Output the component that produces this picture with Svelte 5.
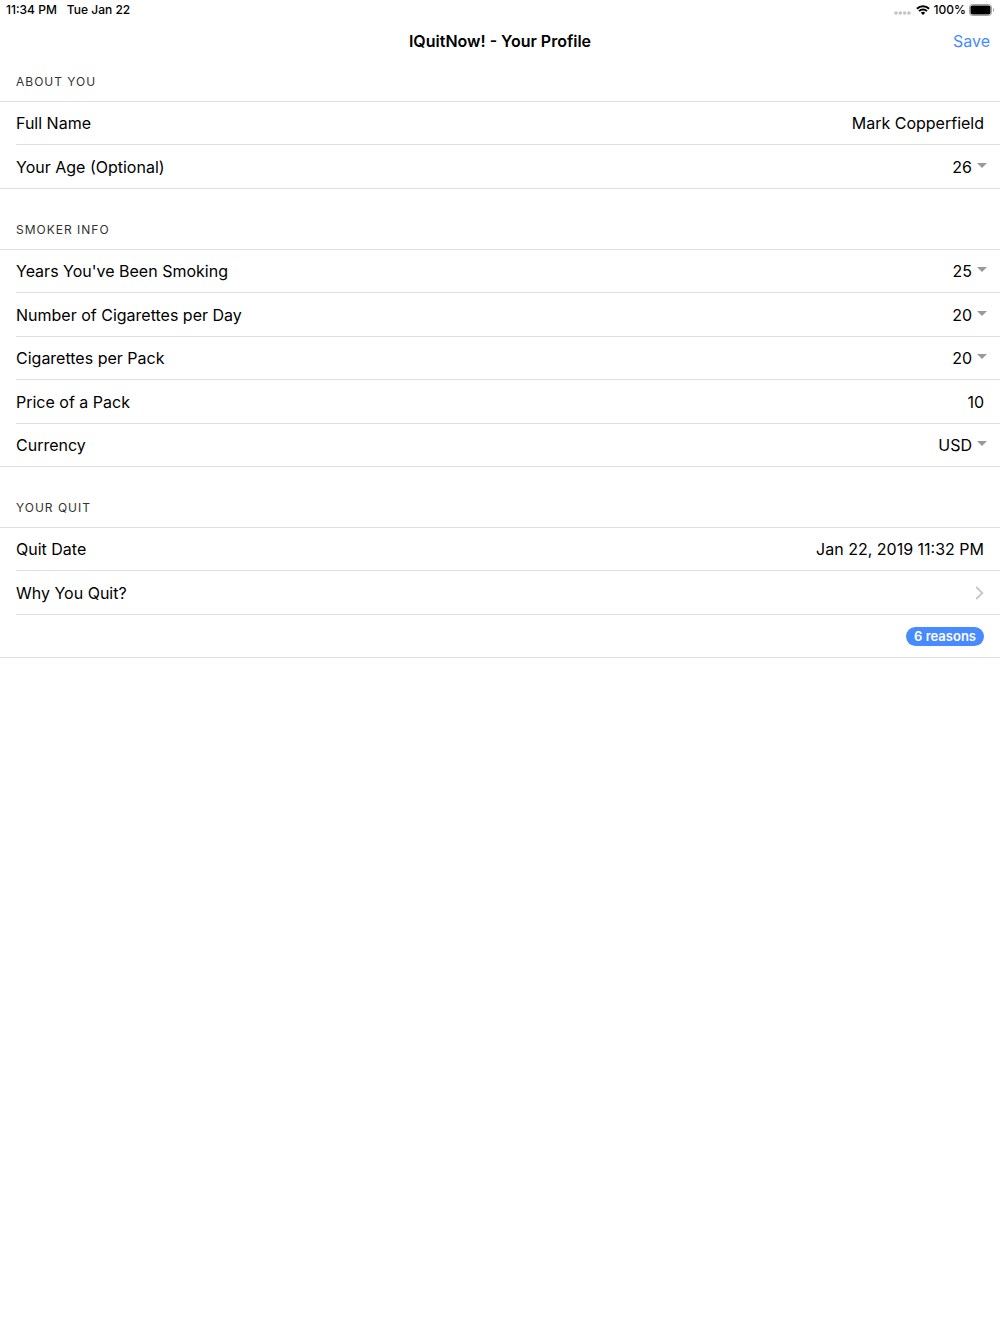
<script>
  let profile = $state({
    name: "Mark Copperfield",
    age: "26",
    years: "25",
    perDay: "20",
    perPack: "20",
    price: "10",
    currency: "USD",
    quitDate: "Jan 22, 2019 11:32 PM",
    reasons: 6,
  });

  const range = (from, to) => Array.from({ length: to - from + 1 }, (_, i) => String(from + i));

  const sections = [
    {
      title: "About You",
      rows: [
        { key: "name", label: "Full Name" },
        { key: "age", label: "Your Age (Optional)", options: range(12, 99) },
      ],
    },
    {
      title: "Smoker Info",
      rows: [
        { key: "years", label: "Years You've Been Smoking", options: range(1, 80) },
        { key: "perDay", label: "Number of Cigarettes per Day", options: range(1, 80) },
        { key: "perPack", label: "Cigarettes per Pack", options: range(10, 50) },
        { key: "price", label: "Price of a Pack" },
        { key: "currency", label: "Currency", options: ["USD", "EUR", "GBP", "CAD"] },
      ],
    },
    {
      title: "Your Quit",
      rows: [
        { key: "quitDate", label: "Quit Date", readonly: true },
        { key: "reasons", label: "Why You Quit?", link: true },
      ],
    },
  ];
</script>

<div class="status">
  <span>11:34 PM</span>
  <span class="status__date">Tue Jan 22</span>
  <svg class="status__dots" width="17" height="4" viewBox="0 0 17 4" fill="#c4c4c6" aria-hidden="true">
    <circle cx="2" cy="2" r="1.8" />
    <circle cx="6.3" cy="2" r="1.8" />
    <circle cx="10.6" cy="2" r="1.8" />
    <circle cx="14.9" cy="2" r="1.8" />
  </svg>
  <svg class="status__wifi" width="14" height="10" viewBox="0 0 14 10" aria-hidden="true">
    <path d="M.9 3.7a8.7 8.7 0 0 1 12.2 0M3 6.1a5.7 5.7 0 0 1 8 0" fill="none" stroke="#000" stroke-width="2" />
    <path d="M7 10 4.8 7.8a3.1 3.1 0 0 1 4.4 0z" />
  </svg>
  <span>100%</span>
  <svg class="status__battery" width="26" height="12" viewBox="0 0 26 12" aria-hidden="true">
    <rect x="0.5" y="0.5" width="22" height="11" rx="2.8" fill="none" stroke="#a3a3a5" />
    <rect x="1.5" y="1.5" width="20" height="9" rx="1.8" />
    <path d="M24 4c1.6.5 1.6 3.5 0 4z" fill="#a3a3a5" />
  </svg>
</div>

<header class="toolbar">
  <h1>IQuitNow! - Your Profile</h1>
  <button class="toolbar__save" type="button">Save</button>
</header>

<main>
  {#each sections as section}
    <section>
      <h2>{section.title}</h2>
      <div class="list">
        {#each section.rows as row}
          {#if row.link}
            <a class="row" href="#reasons">
              <span class="row__label">{row.label}</span>
              <svg class="chevron" width="9" height="14" viewBox="0 0 9 14" aria-hidden="true">
                <path d="m1.2 1 6.1 6-6.1 6" fill="none" stroke="#c8c7cc" stroke-width="1.9" />
              </svg>
            </a>
            <div class="row">
              <span class="badge">{profile[row.key]} reasons</span>
            </div>
          {:else}
            <label class="row">
              <span class="row__label">{row.label}</span>
              {#if row.options}
                <select bind:value={profile[row.key]}>
                  {#each row.options as option}
                    <option>{option}</option>
                  {/each}
                </select>
                <svg class="caret" width="10" height="5" viewBox="0 0 10 5" aria-hidden="true">
                  <path d="M0 0h10L5 5z" fill="#999" />
                </svg>
              {:else}
                <input type="text" readonly={row.readonly} bind:value={profile[row.key]} />
              {/if}
            </label>
          {/if}
        {/each}
      </div>
    </section>
  {/each}
</main>

<style>
  :global(body) {
    background: #fff;
    color: #000;
    font-family: Inter, "Liberation Sans", sans-serif;
    font-size: 16px;
  }
  .status {
    display: flex;
    align-items: center;
    height: 20px;
    padding: 0 5px 0 6px;
    font-size: 12px;
    font-weight: 500;
    line-height: 14px;
  }
  .status__date { margin-left: 10px; }
  .status__dots {
    margin: 6px 5px 0 auto;
  }
  .status__wifi { margin-right: 4px; }
  .status__battery { margin-left: 3px; }
  .toolbar {
    display: grid;
    grid-template-columns: 1fr auto 1fr;
    align-items: center;
    height: 42px;
    padding: 0 10px;
  }
  h1 {
    grid-column: 2;
    margin: 0;
    font-size: 16px;
    font-weight: 600;
  }
  .toolbar__save {
    justify-self: end;
    padding: 0;
    border: 0;
    background: none;
    color: #488aff;
    font: inherit;
  }
  section { margin-bottom: 21px; }
  h2 {
    margin: 0;
    padding: 0 16px;
    color: #333;
    font-size: 12px;
    font-weight: 400;
    letter-spacing: 1px;
    line-height: 39px;
    text-transform: uppercase;
  }
  .list {
    display: grid;
    grid-auto-rows: 43px 44px;
    border-top: 1px solid #e0e0e2;
  }
  .row {
    display: flex;
    align-items: center;
    box-sizing: border-box;
    margin-left: 16px;
    padding-right: 16px;
    border-bottom: 1px solid #e0e0e2;
    color: inherit;
    text-decoration: none;
  }
  .row:last-child {
    margin-left: 0;
    padding-left: 16px;
  }
  .row__label { margin-right: auto; }
  input,
  select {
    appearance: none;
    padding: 0;
    border: 0;
    outline: 0;
    background: none;
    color: inherit;
    font: inherit;
    text-align: right;
    text-align-last: right;
  }
  input { width: 50%; }
  .caret {
    margin: 0 -3px 3px 5px;
  }
  .badge {
    margin-left: auto;
    padding: 0 8px;
    border-radius: 10px;
    background: #488aff;
    color: #fff;
    font-size: 13px;
    font-weight: 600;
    line-height: 19px;
  }
</style>
